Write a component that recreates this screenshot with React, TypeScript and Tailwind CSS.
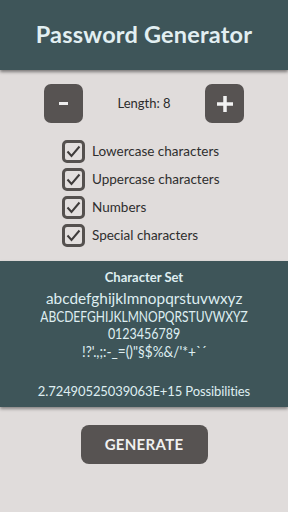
import React from "react";

const Check = () => (
  <div className="w-[23px] h-[23px] rounded-[5px] border-[3px] border-[#55514f] bg-[#e3dfde] flex items-center justify-center">
    <svg width="15" height="13" viewBox="0 0 15 13">
      <path d="M1.5 6.5 L5.5 11 L13.5 1.5" fill="none" stroke="#3f3c3b" strokeWidth="2" />
    </svg>
  </div>
);

export default function App() {
  const opts = ["Lowercase characters", "Uppercase characters", "Numbers", "Special characters"];
  return (
    <div className="w-[288px] h-[512px] bg-[#e0dcdb] flex flex-col overflow-hidden" style={{ fontFamily: "Lato, 'Open Sans', sans-serif" }}>
      <div className="h-[70px] bg-[#3e5559] flex items-center justify-center shadow-[0_2px_3px_rgba(0,0,0,0.45)]">
        <span className="text-[23.5px] font-bold text-[#e2eff2] tracking-[0.2px]">Password Generator</span>
      </div>
      <div className="flex items-center justify-between px-[44px] mt-[14px]">
        <div className="w-[39px] h-[39px] rounded-[7px] bg-[#575352] flex items-center justify-center">
          <div className="w-[9px] h-[3px] bg-[#eeeeee]" />
        </div>
        <span className="text-[13px] text-[#2c2c2c]">Length: 8</span>
        <div className="w-[39px] h-[39px] rounded-[7px] bg-[#575352] flex items-center justify-center">
          <svg width="18" height="18" viewBox="0 0 18 18">
            <path d="M9 1 V17 M1 9 H17" stroke="#f2f2f2" strokeWidth="3.5" />
          </svg>
        </div>
      </div>
      <div className="flex flex-col gap-[5px] pl-[62px] mt-[17px]">
        {opts.map((o) => (
          <div key={o} className="flex items-center gap-[7px] h-[23px]">
            <Check />
            <span className="text-[13.5px] text-[#2e2e2e]">{o}</span>
          </div>
        ))}
      </div>
      <div className="mt-[14px] h-[146px] bg-[#3e5559] shadow-[0_2px_3px_rgba(0,0,0,0.4)] flex flex-col items-center text-[#dfeef1] pt-[7px]">
        <span className="text-[13px] font-bold leading-[18px]">Character Set</span>
        <div className="mt-[4px] flex flex-col items-center text-[15.5px] leading-[17.5px] whitespace-nowrap">
          <span className="scale-x-[0.99]">abcdefghijklmnopqrstuvwxyz</span>
          <span className="text-[14.5px] scale-x-[0.83]">ABCDEFGHIJKLMNOPQRSTUVWXYZ</span>
          <span className="text-[14.5px] scale-x-[0.86]">0123456789</span>
          <span className="text-[14.5px] scale-x-[0.94]">!?'.,;:-_=()"§$%&amp;/'*+`´</span>
        </div>
        <span className="mt-[22px] text-[13px] tracking-[-0.1px]">2.72490525039063E+15 Possibilities</span>
      </div>
      <div className="flex justify-center mt-[18px]">
        <div className="w-[127px] h-[39px] rounded-[8px] bg-[#575352] flex items-center justify-center">
          <span className="text-[15px] font-bold text-[#f0f0f0] tracking-[0.3px]">GENERATE</span>
        </div>
      </div>
    </div>
  );
}
